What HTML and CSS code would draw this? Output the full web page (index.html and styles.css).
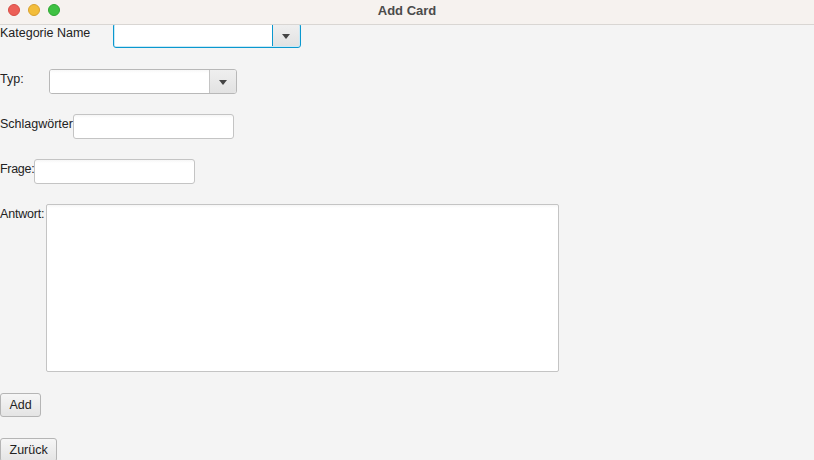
FILE: index.html
```html
<!DOCTYPE html>
<html>
<head>
<meta charset="utf-8">
<link rel="stylesheet" href="styles.css">
</head>
<body>
<div class="window">
  <div class="titlebar">
    <div class="lights">
      <span class="light red"></span>
      <span class="light yellow"></span>
      <span class="light green"></span>
    </div>
    <div class="title">Add Card</div>
  </div>
  <div class="form">
    <div class="row row-gap">
      <div class="label w-kat">Kategorie Name</div>
      <div class="combo focused w-combo">
        <div class="combo-field"></div>
        <div class="combo-arrow"><span class="tri"></span></div>
      </div>
    </div>
    <div class="row row-gap r2">
      <div class="label w-typ">Typ:</div>
      <div class="combo w-combo">
        <div class="combo-field"></div>
        <div class="combo-arrow"><span class="tri"></span></div>
      </div>
    </div>
    <div class="row r3">
      <div class="label w-schlag">Schlagwörter</div>
      <div class="field w-field"></div>
    </div>
    <div class="row r3">
      <div class="label w-frage">Frage:</div>
      <div class="field w-field"></div>
    </div>
    <div class="row r3">
      <div class="label w-antwort">Antwort:</div>
      <div class="field area"></div>
    </div>
    <div class="row r-btn">
      <button class="btn">Add</button>
    </div>
    <div class="row r-btn">
      <button class="btn">Zurück</button>
    </div>
  </div>
</div>
</body>
</html>
```
FILE: styles.css
```css
* { box-sizing: border-box; }
html, body {
  margin: 0;
  padding: 0;
  width: 814px;
  height: 460px;
  overflow: hidden;
  background: #f4f4f4;
  font-family: "Liberation Sans", Arial, sans-serif;
  font-size: 12.5px;
  color: #222;
}
.window { width: 814px; height: 460px; display: flex; flex-direction: column; }
.titlebar {
  height: 25px;
  flex: none;
  background: #f6f2ef;
  border-bottom: 1px solid #d9d6d3;
  display: flex;
  align-items: center;
  position: relative;
}
.lights { display: flex; gap: 8px; padding-left: 8px; margin-top: -4px; }
.light { width: 12px; height: 12px; border-radius: 50%; display: block; }
.red { background: #ec5f57; border: 0.5px solid #d74d45; }
.yellow { background: #f3bd3a; border: 0.5px solid #d9a12e; }
.green { background: #3ec142; border: 0.5px solid #2fa733; }
.title {
  position: absolute;
  left: 0; right: 0; top: 3px;
  text-align: center;
  font-weight: bold;
  font-size: 13px;
  color: #4b4b4b;
}
.form { display: flex; flex-direction: column; margin-top: -2px; }
.row { display: flex; align-items: flex-start; }
.row-gap { gap: 25px; }
.r2 { margin-top: 21px; }
.r3 { margin-top: 20px; }
.r-btn { margin-top: 21px; }
.label {
  line-height: 17px;
  padding-top: 2px;
  white-space: nowrap;
  color: #222;
  position: relative;
  z-index: 1;
}
.w-kat { width: 88px; }
.w-typ { width: 24px; }
.w-schlag { width: 73px; }
.w-frage { width: 34px; letter-spacing: -0.3px; }
.w-antwort { width: 46px; letter-spacing: -0.2px; }
.w-combo { width: 188px; }
.combo {
  height: 25px;
  display: flex;
  border: 1px solid #b8b8b8;
  border-radius: 3px;
  background: #fff;
  overflow: hidden;
}
.combo.focused {
  height: 25px;
  border: 1px solid #0a98cf;
  box-shadow: inset 0 0 0 1px #c9e9f6;
}
.combo-field { flex: 1; background: linear-gradient(#f7f7f7, #fff 3px); }
.combo.focused .combo-field { background: #fff; margin: 1px 0 1px 1px; }
.combo-arrow {
  width: 27px;
  border-left: 1px solid #c4c4c4;
  background: linear-gradient(#efefef, #e2e2e2);
  display: flex;
  align-items: center;
  justify-content: center;
}
.combo.focused .combo-arrow { border-left: 1px solid #0a98cf; margin: 1px 1px 1px 0; }
.tri {
  width: 0; height: 0;
  border-left: 4.5px solid transparent;
  border-right: 4.5px solid transparent;
  border-top: 5px solid #444;
  margin-top: 1px;
}
.field {
  height: 25px;
  border: 1px solid #c4c4c4;
  border-radius: 3px;
  background: linear-gradient(#f6f6f6, #fff 3px);
}
.w-field { width: 161px; }
.area { width: 513px; height: 168px; border-radius: 2px; }
.btn {
  font-family: "Liberation Sans", Arial, sans-serif;
  font-size: 12.5px;
  color: #222;
  height: 24px;
  padding: 0 8.5px;
  border: 1px solid #b5b5b5;
  border-radius: 3px;
  background: linear-gradient(#f6f6f6, #e4e4e4);
  margin: 0;
}
```
